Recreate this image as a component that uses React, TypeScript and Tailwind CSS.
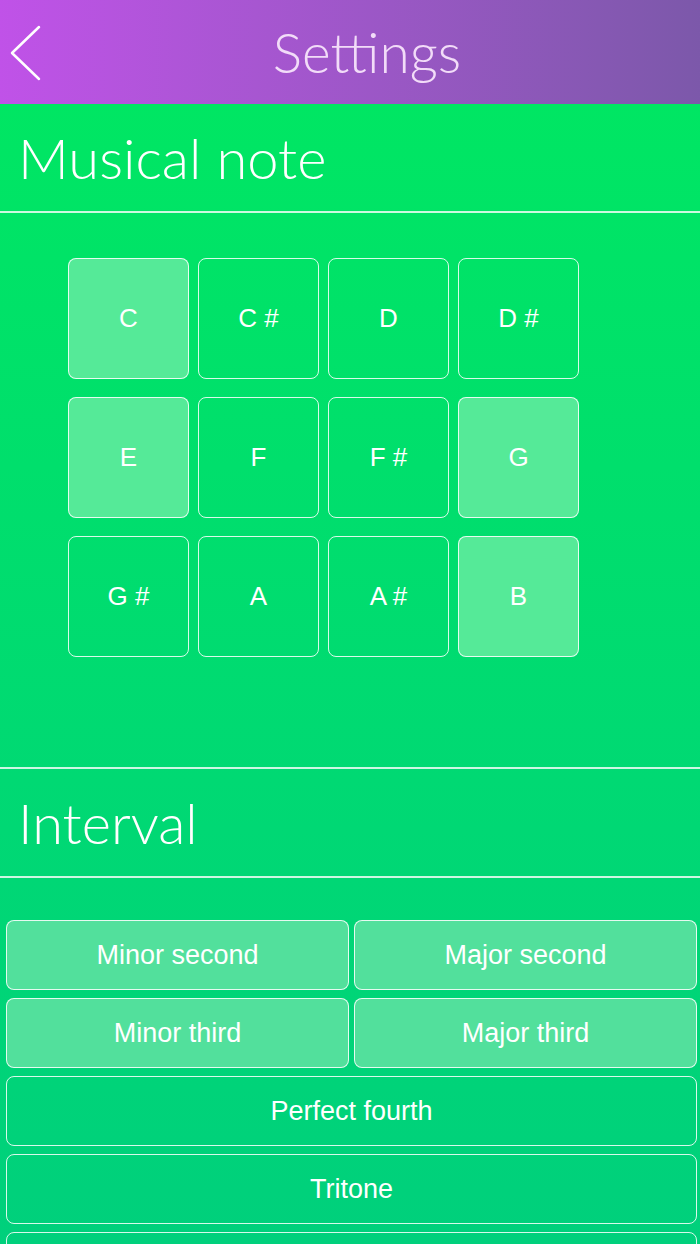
import React from "react";

const notes = [
  ["C", true], ["C #", false], ["D", false], ["D #", false],
  ["E", true], ["F", false], ["F #", false], ["G", true],
  ["G #", false], ["A", false], ["A #", false], ["B", true],
] as const;

const thin = { fontFamily: "Lato, 'Open Sans', sans-serif" };

export default function App() {
  return (
    <div className="w-[700px] h-[1244px] overflow-hidden bg-gradient-to-b from-[#00e860] to-[#00d07c]" style={{ fontFamily: "'Liberation Sans', Arial, sans-serif" }}>
      <div className="relative h-[104px] bg-gradient-to-r from-[#c052e8] to-[#7c58aa] flex items-center justify-center">
        <svg className="absolute left-[9px] top-[25px]" width="34" height="56" viewBox="0 0 34 56">
          <path d="M30 2 L3 28 L30 54" fill="none" stroke="white" strokeWidth="2.5" strokeLinecap="round" strokeLinejoin="round" />
        </svg>
        <span className="text-[55px] font-light text-[#f2dcf8] ml-[34px] leading-none" style={thin}>Settings</span>
      </div>
      <div className="h-[109px] flex items-center pl-[18px] border-b-2 border-white/80">
        <span className="text-[56px] font-light text-white leading-none" style={thin}>Musical note</span>
      </div>
      <div className="h-[554px] pt-[45px] pl-[68px]">
        <div className="grid grid-cols-[repeat(4,121px)] gap-x-[9px] gap-y-[18px]">
          {notes.map(([n, sel]) => (
            <div key={n} className={`h-[121px] rounded-[8px] border-[1.5px] border-white/85 flex items-center justify-center text-white text-[26px] ${sel ? "bg-[#55ea98]" : ""}`}>
              {n}
            </div>
          ))}
        </div>
      </div>
      <div className="border-t-2 border-white/80 h-[111px] flex items-center pl-[18px] border-b-2">
        <span className="text-[56px] font-light text-white leading-none" style={thin}>Interval</span>
      </div>
      <div className="pt-[42px] pl-[6px] pr-[3px] flex flex-col gap-[8px]">
        <div className="grid grid-cols-2 gap-[5px]">
          <div className="h-[70px] rounded-[8px] border-[1.5px] border-white/85 bg-[#52e09c] flex items-center justify-center text-white text-[27px]">Minor second</div>
          <div className="h-[70px] rounded-[8px] border-[1.5px] border-white/85 bg-[#52e09c] flex items-center justify-center text-white text-[27px]">Major second</div>
        </div>
        <div className="grid grid-cols-2 gap-[5px]">
          <div className="h-[70px] rounded-[8px] border-[1.5px] border-white/85 bg-[#52e09c] flex items-center justify-center text-white text-[27px]">Minor third</div>
          <div className="h-[70px] rounded-[8px] border-[1.5px] border-white/85 bg-[#52e09c] flex items-center justify-center text-white text-[27px]">Major third</div>
        </div>
        <div className="h-[70px] rounded-[8px] border-[1.5px] border-white/85 flex items-center justify-center text-white text-[27px]">Perfect fourth</div>
        <div className="h-[70px] rounded-[8px] border-[1.5px] border-white/85 flex items-center justify-center text-white text-[27px]">Tritone</div>
        <div className="h-[70px] rounded-[8px] border-[1.5px] border-white/85"></div>
      </div>
    </div>
  );
}
